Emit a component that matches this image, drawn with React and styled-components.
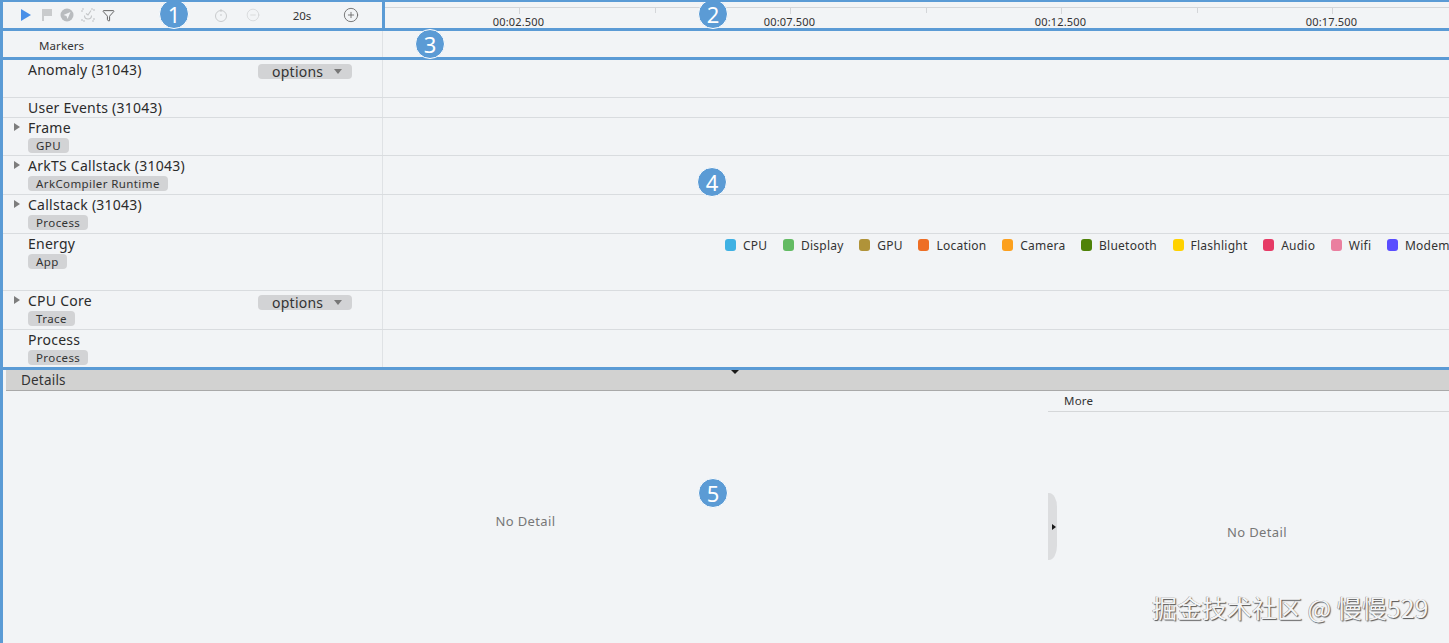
import React from 'react';
import styled, { createGlobalStyle } from 'styled-components';
import { CirclePlus, CircleMinus, Filter } from 'lucide-react';

const BLUE = '#5b9bd5';

const GlobalStyle = createGlobalStyle`
  html, body {
    margin: 0;
    padding: 0;
    background: #f2f4f6;
  }
  body {
    font-family: "Noto Sans", "Noto Sans CJK SC", sans-serif;
    color: #2b2b2b;
  }
`;

const Page = styled.div`
  position: relative;
  width: 1449px;
  height: 643px;
  overflow: hidden;
  box-sizing: border-box;
  border-left: 3px solid ${BLUE};
  border-top: 2px solid ${BLUE};
  background: #f2f4f6;
`;

const Header = styled.div`
  display: flex;
  height: 29px;
  box-sizing: border-box;
  border-bottom: 3px solid ${BLUE};
`;

const Toolbar = styled.div`
  display: grid;
  grid-template-columns: repeat(5, 20.5px) 86.5px 32px 32px 66px 32px;
  align-items: center;
  width: 382px;
  height: 29px;
  flex: none;
  box-sizing: border-box;
  padding-left: 13px;
  border-right: 3px solid ${BLUE};
  border-bottom: 3px solid ${BLUE};
`;

const Slot = styled.span`
  display: flex;
  align-items: center;
  justify-content: center;
  height: 26px;
  color: ${p => p.$color || '#b9bcbf'};
`;

const Duration = styled.span`
  font-size: 11.5px;
  text-align: center;
  color: #333;
`;

const Ruler = styled.div`
  position: relative;
  flex: 1;
  min-width: 0;
  display: flex;
  align-items: flex-end;
  overflow: hidden;
`;

const RulerTicks = styled.svg`
  position: absolute;
  left: 0;
  top: 0;
`;

const RulerLabel = styled.span`
  flex: none;
  width: 271px;
  margin-bottom: -1px;
  font-size: 11px;
  line-height: 14px;
  letter-spacing: 0.15px;
  text-align: center;
  color: #333;
  &:first-of-type {
    margin-left: -2px;
  }
`;

const MarkerRow = styled.div`
  display: flex;
  height: 29px;
  box-sizing: border-box;
  border-bottom: 3px solid ${BLUE};
`;

const MarkerLabel = styled.div`
  width: 380px;
  flex: none;
  box-sizing: border-box;
  padding: 7px 0 0 36px;
  font-size: 11.5px;
  line-height: 16px;
  letter-spacing: 0.1px;
  border-right: 1px solid #dfe2e5;
  color: #333;
`;

const Rows = styled.div`
  display: flex;
  flex-direction: column;
  height: 310px;
  box-sizing: border-box;
  border-bottom: 3px solid ${BLUE};
`;

const Row = styled.div`
  display: flex;
  height: ${p => p.$height}px;
  flex: none;
  box-sizing: border-box;
  border-bottom: ${p => (p.$last ? 'none' : '1px solid #d9dcdf')};
`;

const NameCell = styled.div`
  position: relative;
  width: 380px;
  flex: none;
  box-sizing: border-box;
  padding-left: 25px;
  border-right: 1px solid #dfe2e5;
`;

const TitleLine = styled.div`
  display: flex;
  align-items: flex-start;
  font-size: 14px;
  line-height: 19px;
  letter-spacing: 0.25px;
  color: #2b2b2b;
`;

const Expander = styled.span`
  position: absolute;
  left: 11px;
  top: 5px;
  width: 0;
  height: 0;
  border-left: 6px solid #7d7d7d;
  border-top: 4px solid transparent;
  border-bottom: 4px solid transparent;
`;

const Tag = styled.span`
  display: block;
  width: fit-content;
  height: 15px;
  margin-top: 1px;
  padding: 0 8px;
  border-radius: 4px;
  background: #d2d3d5;
  font-size: 11.5px;
  line-height: 15px;
  letter-spacing: 0.4px;
  color: #333;
`;

const Options = styled.span`
  display: flex;
  align-items: center;
  justify-content: space-between;
  width: 94px;
  height: 15px;
  box-sizing: border-box;
  padding: 0 10px 0 14px;
  margin: 4px 30px 0 auto;
  border-radius: 4px;
  background: #d2d3d5;
  font-size: 14px;
  line-height: 15px;
  letter-spacing: 0.25px;
  color: #333;
`;

const Caret = styled.span`
  width: 0;
  height: 0;
  border-top: 5px solid #777;
  border-left: 4.5px solid transparent;
  border-right: 4.5px solid transparent;
`;

const Track = styled.div`
  flex: 1;
  min-width: 0;
  overflow: hidden;
`;

const Legend = styled.div`
  display: flex;
  align-items: center;
  gap: 15.6px;
  padding: 2px 0 0 342px;
  height: 18px;
  white-space: nowrap;
`;

const LegendItem = styled.span`
  display: flex;
  align-items: center;
  gap: 7px;
  font-size: 12px;
  letter-spacing: 0.25px;
  color: #333;
`;

const Swatch = styled.i`
  display: block;
  width: 11px;
  height: 12px;
  border-radius: 3px;
  background: ${p => p.$color};
`;

const DetailsBar = styled.div`
  position: relative;
  height: 21px;
  margin-left: 3px;
  box-sizing: border-box;
  padding-left: 15px;
  background: #d2d2d1;
  border-bottom: 1px solid #a9a9a9;
  font-size: 13.5px;
  line-height: 20px;
  letter-spacing: 0.2px;
  color: #333;
`;

const DragHandle = styled.span`
  position: absolute;
  left: 725px;
  top: 0;
  width: 0;
  height: 0;
  border-top: 4px solid #1a1a1a;
  border-left: 4px solid transparent;
  border-right: 4px solid transparent;
`;

const Panes = styled.div`
  display: flex;
  height: 252px;
`;

const MainPane = styled.div`
  display: flex;
  align-items: center;
  justify-content: center;
  flex: none;
  width: 1045px;
  box-sizing: border-box;
  padding-top: 8px;
`;

const SidePane = styled.div`
  position: relative;
  display: flex;
  flex-direction: column;
  flex: 1;
  min-width: 0;
`;

const SideHeader = styled.div`
  height: 21px;
  box-sizing: border-box;
  padding-left: 16px;
  border-bottom: 1px solid #d5d7d9;
  font-size: 11.5px;
  line-height: 20px;
  letter-spacing: 0.2px;
  color: #333;
`;

const SideBody = styled.div`
  flex: 1;
  display: flex;
  align-items: center;
  justify-content: center;
  padding: 8px 0 0 17px;
`;

const Empty = styled.span`
  font-size: 13px;
  letter-spacing: 0.35px;
  color: #777;
`;

const Collapse = styled.span`
  position: absolute;
  left: 0;
  top: 102px;
  display: flex;
  align-items: center;
  justify-content: flex-end;
  width: 9px;
  height: 67px;
  box-sizing: border-box;
  padding-right: 1px;
  background: #dcdddf;
  border-radius: 0 8px 8px 0 / 0 14px 14px 0;
`;

const CollapseArrow = styled.span`
  width: 0;
  height: 0;
  border-left: 4px solid #1a1a1a;
  border-top: 3px solid transparent;
  border-bottom: 3px solid transparent;
`;

const Badge = styled.span`
  position: absolute;
  left: ${p => p.$x - 15 - 3}px;
  top: ${p => p.$y - 15 - 2}px;
  width: 30px;
  height: 30px;
  box-sizing: border-box;
  display: flex;
  align-items: center;
  justify-content: center;
  border-radius: 50%;
  border: 1px solid #fff;
  background: ${BLUE};
  color: #fff;
  font-size: 22px;
  line-height: 1;
`;

const Watermark = styled.span`
  position: absolute;
  left: 1149px;
  top: 590px;
  font-family: "Noto Sans CJK SC", "Noto Sans", sans-serif;
  font-size: 25px;
  line-height: 30px;
  white-space: nowrap;
  color: #f4f5f6;
  text-shadow: 1px 1px 1px #555, -0.5px -0.5px 0.5px #888;
`;

const legend = [
  ['CPU', '#3fb1e3'],
  ['Display', '#63bb63'],
  ['GPU', '#b09339'],
  ['Location', '#ee6e25'],
  ['Camera', '#fca01e'],
  ['Bluetooth', '#4f8208'],
  ['Flashlight', '#ffd200'],
  ['Audio', '#e63b66'],
  ['Wifi', '#ea7f9f'],
  ['Modem', '#5a4dff']
];

const rows = [
  { title: 'Anomaly (31043)', height: 38, options: true },
  { title: 'User Events (31043)', height: 20 },
  { title: 'Frame', height: 38, tag: 'GPU', arrow: true },
  { title: 'ArkTS Callstack (31043)', height: 39, tag: 'ArkCompiler Runtime', arrow: true },
  { title: 'Callstack (31043)', height: 39, tag: 'Process', arrow: true },
  { title: 'Energy', height: 57, tag: 'App', legend: true },
  { title: 'CPU Core', height: 39, tag: 'Trace', arrow: true, options: true },
  { title: 'Process', height: 37, tag: 'Process', last: true }
];

const PlayIcon = () => (
  <svg width="12" height="14" viewBox="0 0 12 14">
    <path d="M1 1l10 6-10 6z" fill="#4a90e8" />
  </svg>
);

const FlagIcon = () => (
  <svg width="12" height="14" viewBox="0 0 12 14">
    <path d="M1 1h10v7H3v5H1z" fill="#c9cbcd" />
  </svg>
);

const TargetIcon = () => (
  <svg width="14" height="14" viewBox="0 0 14 14">
    <circle cx="7" cy="7" r="6.5" fill="#b9bcbf" />
    <path d="M3.5 7l7-3-3 7-1-3z" fill="#f2f4f6" />
  </svg>
);

const CaptureIcon = () => (
  <svg width="14" height="14" viewBox="0 0 14 14" fill="none" stroke="#c2c4c6" strokeWidth="1.1">
    <path d="M1 4V1h3M10 1h3v3M13 10v3h-3M4 13H1v-3" strokeDasharray="2 1" />
    <path d="M3.5 7.5a3.5 3.5 0 0 0 7 0M10 2.5L7 7 5 5.5" />
  </svg>
);

const TimerIcon = () => (
  <svg width="14" height="14" viewBox="0 0 14 14" fill="none" stroke="#c9cbcd" strokeWidth="1">
    <circle cx="7" cy="8" r="5.5" />
    <path d="M7 1v3M7 8V6" />
  </svg>
);

const App = () => (
  <Page>
    <GlobalStyle />
    <Header>
      <Toolbar>
        <Slot><PlayIcon /></Slot>
        <Slot><FlagIcon /></Slot>
        <Slot><TargetIcon /></Slot>
        <Slot><CaptureIcon /></Slot>
        <Slot $color="#555"><Filter size={13} strokeWidth={1.7} /></Slot>
        <span />
        <Slot><TimerIcon /></Slot>
        <Slot $color="#c9cbcd"><CircleMinus size={14} strokeWidth={1} /></Slot>
        <Duration>20s</Duration>
        <Slot $color="#666"><CirclePlus size={16} strokeWidth={1.3} /></Slot>
      </Toolbar>
      <Ruler>
        <RulerTicks width="1064" height="14">
          <path
            d="M0 5.5H1064M134.5 5v7M270.5 5v6M405.5 5v7M541.5 5v6M676.5 5v7M812.5 5v6M947.5 5v7"
            stroke="#d4d6d9"
            fill="none"
          />
        </RulerTicks>
        <RulerLabel>00:02.500</RulerLabel>
        <RulerLabel>00:07.500</RulerLabel>
        <RulerLabel>00:12.500</RulerLabel>
        <RulerLabel>00:17.500</RulerLabel>
      </Ruler>
    </Header>
    <MarkerRow>
      <MarkerLabel>Markers</MarkerLabel>
    </MarkerRow>
    <Rows>
      {rows.map(r => (
        <Row key={r.title} $height={r.height} $last={r.last}>
          <NameCell>
            {r.arrow && <Expander />}
            <TitleLine>
              {r.title}
              {r.options && (
                <Options>
                  options
                  <Caret />
                </Options>
              )}
            </TitleLine>
            {r.tag && <Tag>{r.tag}</Tag>}
          </NameCell>
          <Track>
            {r.legend && (
              <Legend>
                {legend.map(([name, color]) => (
                  <LegendItem key={name}>
                    <Swatch $color={color} />
                    {name}
                  </LegendItem>
                ))}
              </Legend>
            )}
          </Track>
        </Row>
      ))}
    </Rows>
    <DetailsBar>
      Details
      <DragHandle />
    </DetailsBar>
    <Panes>
      <MainPane>
        <Empty>No Detail</Empty>
      </MainPane>
      <SidePane>
        <SideHeader>More</SideHeader>
        <SideBody>
          <Empty>No Detail</Empty>
        </SideBody>
        <Collapse>
          <CollapseArrow />
        </Collapse>
      </SidePane>
    </Panes>
    <Badge $x={174} $y={14}>1</Badge>
    <Badge $x={713} $y={14}>2</Badge>
    <Badge $x={430} $y={44}>3</Badge>
    <Badge $x={712} $y={182}>4</Badge>
    <Badge $x={713} $y={493}>5</Badge>
    <Watermark>掘金技术社区 @ 慢慢529</Watermark>
  </Page>
);

export default App;
